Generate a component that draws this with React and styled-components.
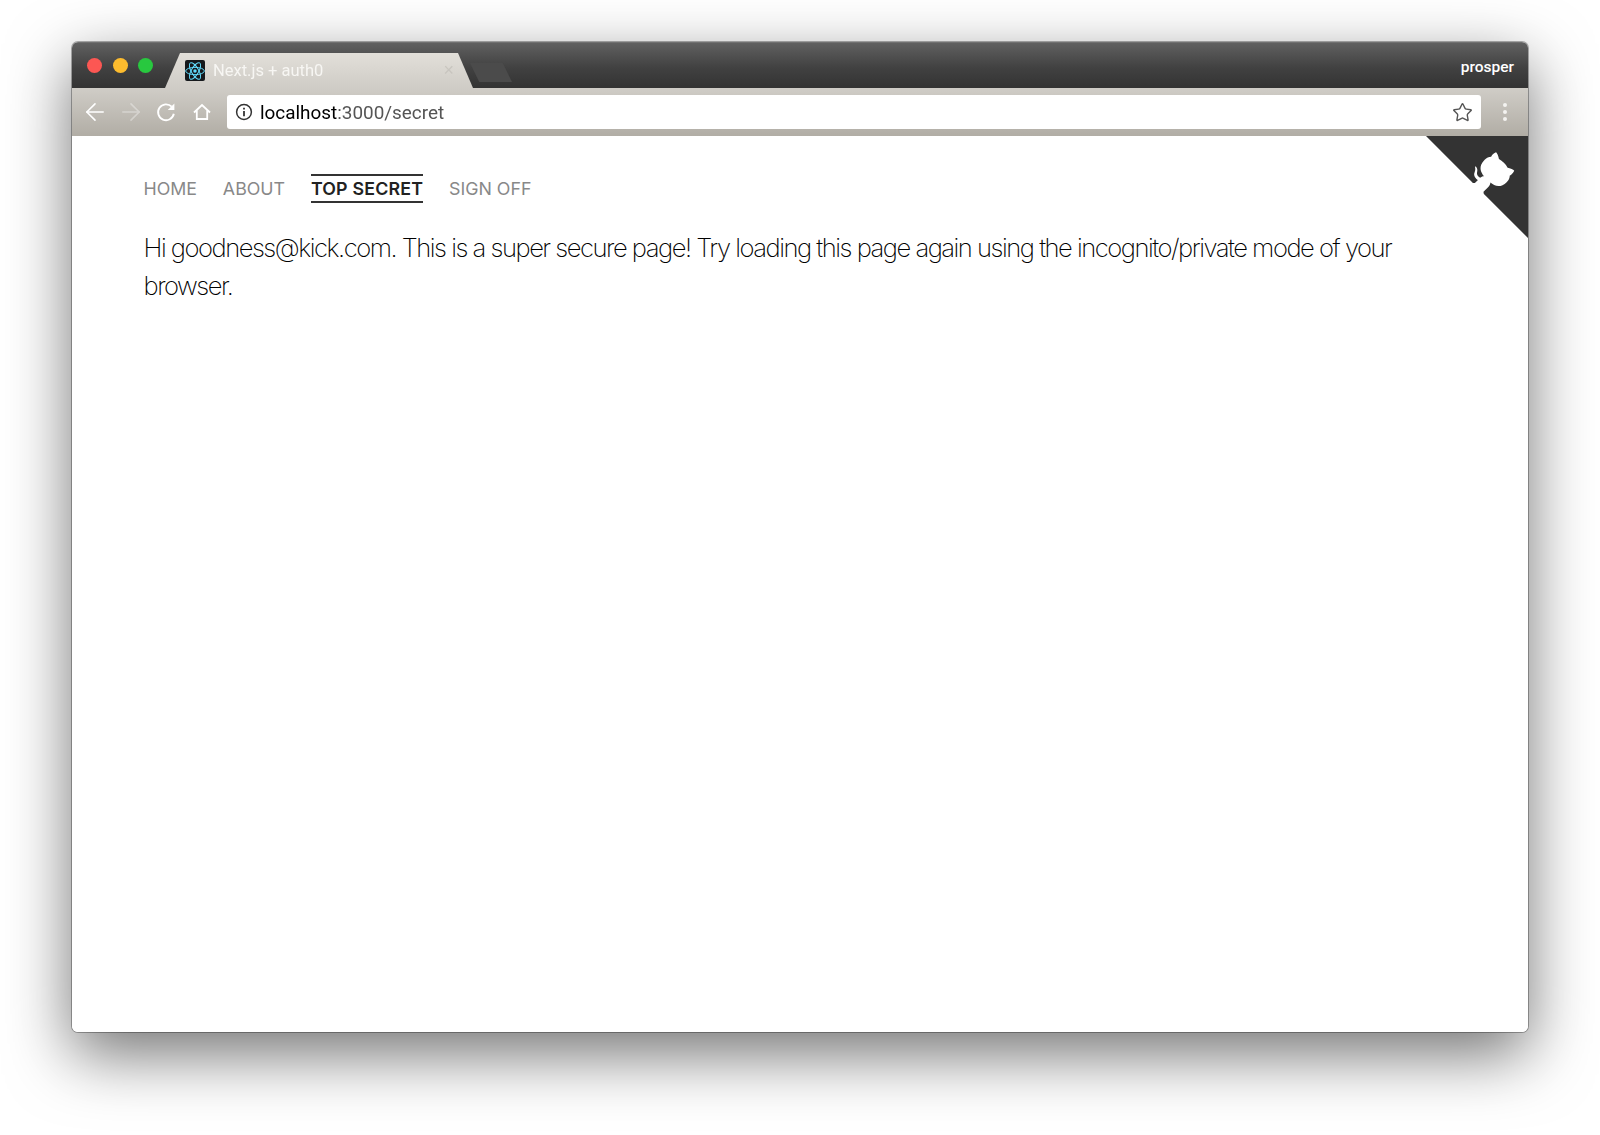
import React from 'react'
import styled, { createGlobalStyle } from 'styled-components'
import { ArrowLeft, ArrowRight, Star } from 'lucide-react'

const GlobalStyle = createGlobalStyle`
    html, body {
        margin: 0;
        padding: 0;
        background: #ffffff;
    }
    body {
        font-family: Inter, "Liberation Sans", sans-serif;
    }
`

const links = [
    { label: 'HOME' },
    { label: 'ABOUT' },
    { label: 'TOP SECRET', active: true },
    { label: 'SIGN OFF' },
]

function ReactIcon() {
    return (
        <svg viewBox="0 0 24 24" width="20" height="20" fill="none" stroke="#61dafb" strokeWidth="1.2">
            <ellipse cx="12" cy="12" rx="11.2" ry="4.4" />
            <ellipse cx="12" cy="12" rx="11.2" ry="4.4" transform="rotate(60 12 12)" />
            <ellipse cx="12" cy="12" rx="11.2" ry="4.4" transform="rotate(120 12 12)" />
            <circle cx="12" cy="12" r="2.1" fill="#61dafb" stroke="none" />
        </svg>
    )
}

function ReloadIcon() {
    return (
        <svg viewBox="0 0 20 20" width="22" height="22" fill="none" stroke="#ffffff" strokeWidth="1.7">
            <path d="M15.2 5.2 A7.2 7.2 0 1 0 17.1 11.6" />
            <path d="M17.6 2.2 V8.2 H11.6 Z" fill="#ffffff" stroke="none" />
        </svg>
    )
}

function HomeIcon() {
    return (
        <svg viewBox="0 0 18 18" width="18" height="18" fill="none" stroke="#ffffff" strokeWidth="1.8" strokeLinejoin="miter">
            <path d="M1 9.5 L9 2 L17 9.5 M3.8 7.5 V16 H14.2 V7.5" />
        </svg>
    )
}

function InfoIcon() {
    return (
        <svg viewBox="0 0 18 18" width="18" height="18" fill="none" stroke="#333333" strokeWidth="1.5">
            <circle cx="9" cy="9" r="7.4" />
            <path d="M9 8 V13.2" strokeWidth="1.8" />
            <path d="M9 4.7 V6.5" strokeWidth="1.8" />
        </svg>
    )
}

function GithubCorner() {
    return (
        <Corner viewBox="0 0 250 250">
            <path fill="#333333" d="M0,0 L115,115 L130,115 L142,142 L250,250 L250,0 Z" />
            <path fill="#ffffff" d="M128.3,109.0 C113.8,99.7 119.0,89.6 119.0,89.6 C122.0,82.7 120.5,78.6 120.5,78.6 C119.2,72.0 123.4,76.3 123.4,76.3 C127.3,80.9 125.5,87.3 125.5,87.3 C122.9,97.6 130.6,101.9 134.4,103.2" />
            <path fill="#ffffff" d="M115.0,115.0 C114.9,115.1 118.7,116.5 119.8,115.4 L133.7,101.6 C136.9,99.2 139.9,98.4 142.2,98.6 C133.8,88.0 127.5,74.4 143.8,58.0 C148.5,53.4 154.0,51.2 159.7,51.0 C160.3,49.4 163.2,43.6 171.4,40.1 C171.4,40.1 176.1,42.5 178.8,56.2 C183.1,58.6 187.2,61.8 190.9,65.4 C194.5,69.0 197.7,73.2 200.1,77.6 C213.8,80.2 216.3,84.9 216.3,84.9 C212.7,93.1 206.9,96.0 205.4,96.6 C205.1,102.4 203.0,107.8 198.3,112.5 C181.9,128.9 168.3,122.5 157.7,114.1 C157.9,116.9 156.7,120.9 152.7,124.9 L141.0,136.5 C139.8,137.7 141.6,141.9 141.8,141.8 Z" />
        </Corner>
    )
}

export default function App() {
    return (
        <>
            <GlobalStyle />
            <Page>
                <BrowserWindow>
                    <TitleBar>
                        <Lights>
                            <Light color="#fc5753" />
                            <Light color="#fdbc2e" />
                            <Light color="#28c83f" />
                        </Lights>
                        <Tab>
                            <Favicon><ReactIcon /></Favicon>
                            <TabTitle>Next.js + auth0</TabTitle>
                            <TabClose>×</TabClose>
                        </Tab>
                        <NewTab />
                        <UserName>prosper</UserName>
                    </TitleBar>
                    <Toolbar>
                        <NavButtons>
                            <IconSlot><ArrowLeft size={28} color="#ffffff" strokeWidth={1.4} /></IconSlot>
                            <IconSlot><ArrowRight size={28} color="#ffffff" strokeWidth={1.4} opacity={0.35} /></IconSlot>
                            <IconSlot><ReloadIcon /></IconSlot>
                            <IconSlot><HomeIcon /></IconSlot>
                        </NavButtons>
                        <AddressBar>
                            <InfoIcon />
                            <Url><strong>localhost</strong>:3000/secret</Url>
                            <Star size={21} color="#555555" strokeWidth={1.6} />
                        </AddressBar>
                        <MenuDots>
                            <i /><i /><i />
                        </MenuDots>
                    </Toolbar>
                    <Content>
                        <GithubCorner />
                        <Nav>
                            {links.map((link) => (
                                <NavLink key={link.label} $active={link.active}>{link.label}</NavLink>
                            ))}
                        </Nav>
                        <Message>
                            Hi goodness@kick.com. This is a super secure page! Try loading this page again using the incognito/private mode of your browser.
                        </Message>
                    </Content>
                </BrowserWindow>
            </Page>
        </>
    )
}

const Page = styled.div`
    width: 1600px;
    height: 1135px;
    box-sizing: border-box;
    padding: 42px 72px 103px;
    overflow: hidden;
`
const BrowserWindow = styled.div`
    width: 1456px;
    height: 990px;
    display: flex;
    flex-direction: column;
    border-radius: 6px;
    overflow: hidden;
    background: #ffffff;
    box-shadow: 0 0 0 1px rgba(0, 0, 0, 0.3);
    filter: drop-shadow(0 22px 32px rgba(0, 0, 0, 0.55));
`
const TitleBar = styled.div`
    height: 47px;
    flex-shrink: 0;
    display: flex;
    align-items: flex-end;
    box-sizing: border-box;
    background: linear-gradient(#606060, #414141 55%, #333333);
    border-top: 1px solid #707070;
    border-bottom: 1px solid #cfccc6;
`
const Lights = styled.div`
    align-self: flex-start;
    display: flex;
    gap: 10.5px;
    padding: 15px 0 0 15px;
`
const Light = styled.span`
    width: 15px;
    height: 15px;
    border-radius: 50%;
    background: ${(props) => props.color};
`
const Tab = styled.div`
    width: 308px;
    height: 35px;
    margin-left: 12px;
    box-sizing: border-box;
    padding: 7px 19px 0 20px;
    display: flex;
    align-items: flex-start;
    background: linear-gradient(#e2dfd9, #cfccc6);
    clip-path: polygon(0 100%, 15px 0, 293px 0, 100% 100%);
`
const Favicon = styled.span`
    width: 20px;
    height: 21px;
    flex-shrink: 0;
    display: flex;
    align-items: center;
    justify-content: center;
    background: #16191c;
    border-radius: 2px;
`
const TabTitle = styled.span`
    margin-left: 8px;
    flex: 1;
    font-family: Roboto, Inter, sans-serif;
    font-size: 16.5px;
    line-height: 21px;
    color: #f7f6f3;
`
const TabClose = styled.span`
    font-family: "Liberation Sans", sans-serif;
    font-size: 18px;
    line-height: 21px;
    color: #c8c5bf;
`
const NewTab = styled.div`
    width: 42px;
    height: 19px;
    margin: 0 0 6px -3px;
    background: #4b4b4b;
    clip-path: polygon(0 0, 78% 0, 100% 100%, 22% 100%);
`
const UserName = styled.span`
    margin: 0 14px 10px auto;
    font-family: Roboto, Inter, sans-serif;
    font-size: 15.5px;
    font-weight: 500;
    line-height: 22px;
    color: #ffffff;
`
const Toolbar = styled.div`
    height: 47px;
    flex-shrink: 0;
    display: flex;
    align-items: flex-start;
    box-sizing: border-box;
    padding-top: 6px;
    background: linear-gradient(#cfccc6, #b1ada5);
`
const NavButtons = styled.div`
    width: 155px;
    height: 34px;
    flex-shrink: 0;
    box-sizing: border-box;
    padding-left: 9px;
    display: flex;
    align-items: center;
    gap: 7.7px;
`
const IconSlot = styled.span`
    width: 28px;
    display: flex;
    align-items: center;
    justify-content: center;
`
const AddressBar = styled.div`
    width: 1254px;
    height: 34px;
    box-sizing: border-box;
    padding: 0 8px;
    display: flex;
    align-items: center;
    background: #ffffff;
    border-radius: 3px;
`
const Url = styled.div`
    flex: 1;
    margin-left: 7px;
    font-family: Roboto, Inter, sans-serif;
    font-size: 18.9px;
    color: #555555;
    strong {
        font-weight: 400;
        color: #000000;
    }
`
const MenuDots = styled.div`
    flex: 1;
    height: 34px;
    display: flex;
    flex-direction: column;
    align-items: center;
    justify-content: center;
    gap: 3px;
    i {
        width: 4px;
        height: 4px;
        border-radius: 50%;
        background: #f4f3f0;
    }
`
const Content = styled.div`
    position: relative;
    flex: 1;
    box-sizing: border-box;
    padding: 38px 100px 0 71.5px;
    background: #ffffff;
`
const Corner = styled.svg`
    position: absolute;
    top: 0;
    right: 0;
    width: 102px;
    height: 102px;
`
const Nav = styled.nav`
    display: flex;
    gap: 25.8px;
    align-items: center;
`
const NavLink = styled.a`
    font-family: Inter, Roboto, sans-serif;
    font-size: 17.8px;
    line-height: 25px;
    letter-spacing: ${(props) => (props.$active ? '0.2px' : '0')};
    font-weight: ${(props) => (props.$active ? 600 : 400)};
    color: ${(props) => (props.$active ? '#222222' : '#888888')};
    border-top: 2px solid ${(props) => (props.$active ? '#333333' : 'transparent')};
    border-bottom: 2px solid ${(props) => (props.$active ? '#333333' : 'transparent')};
`
const Message = styled.p`
    margin: 26px 0 0;
    font-family: Inter, Roboto, sans-serif;
    font-size: 25.6px;
    line-height: 38px;
    font-weight: 250;
    letter-spacing: -1.49px;
    color: #000000;
`
